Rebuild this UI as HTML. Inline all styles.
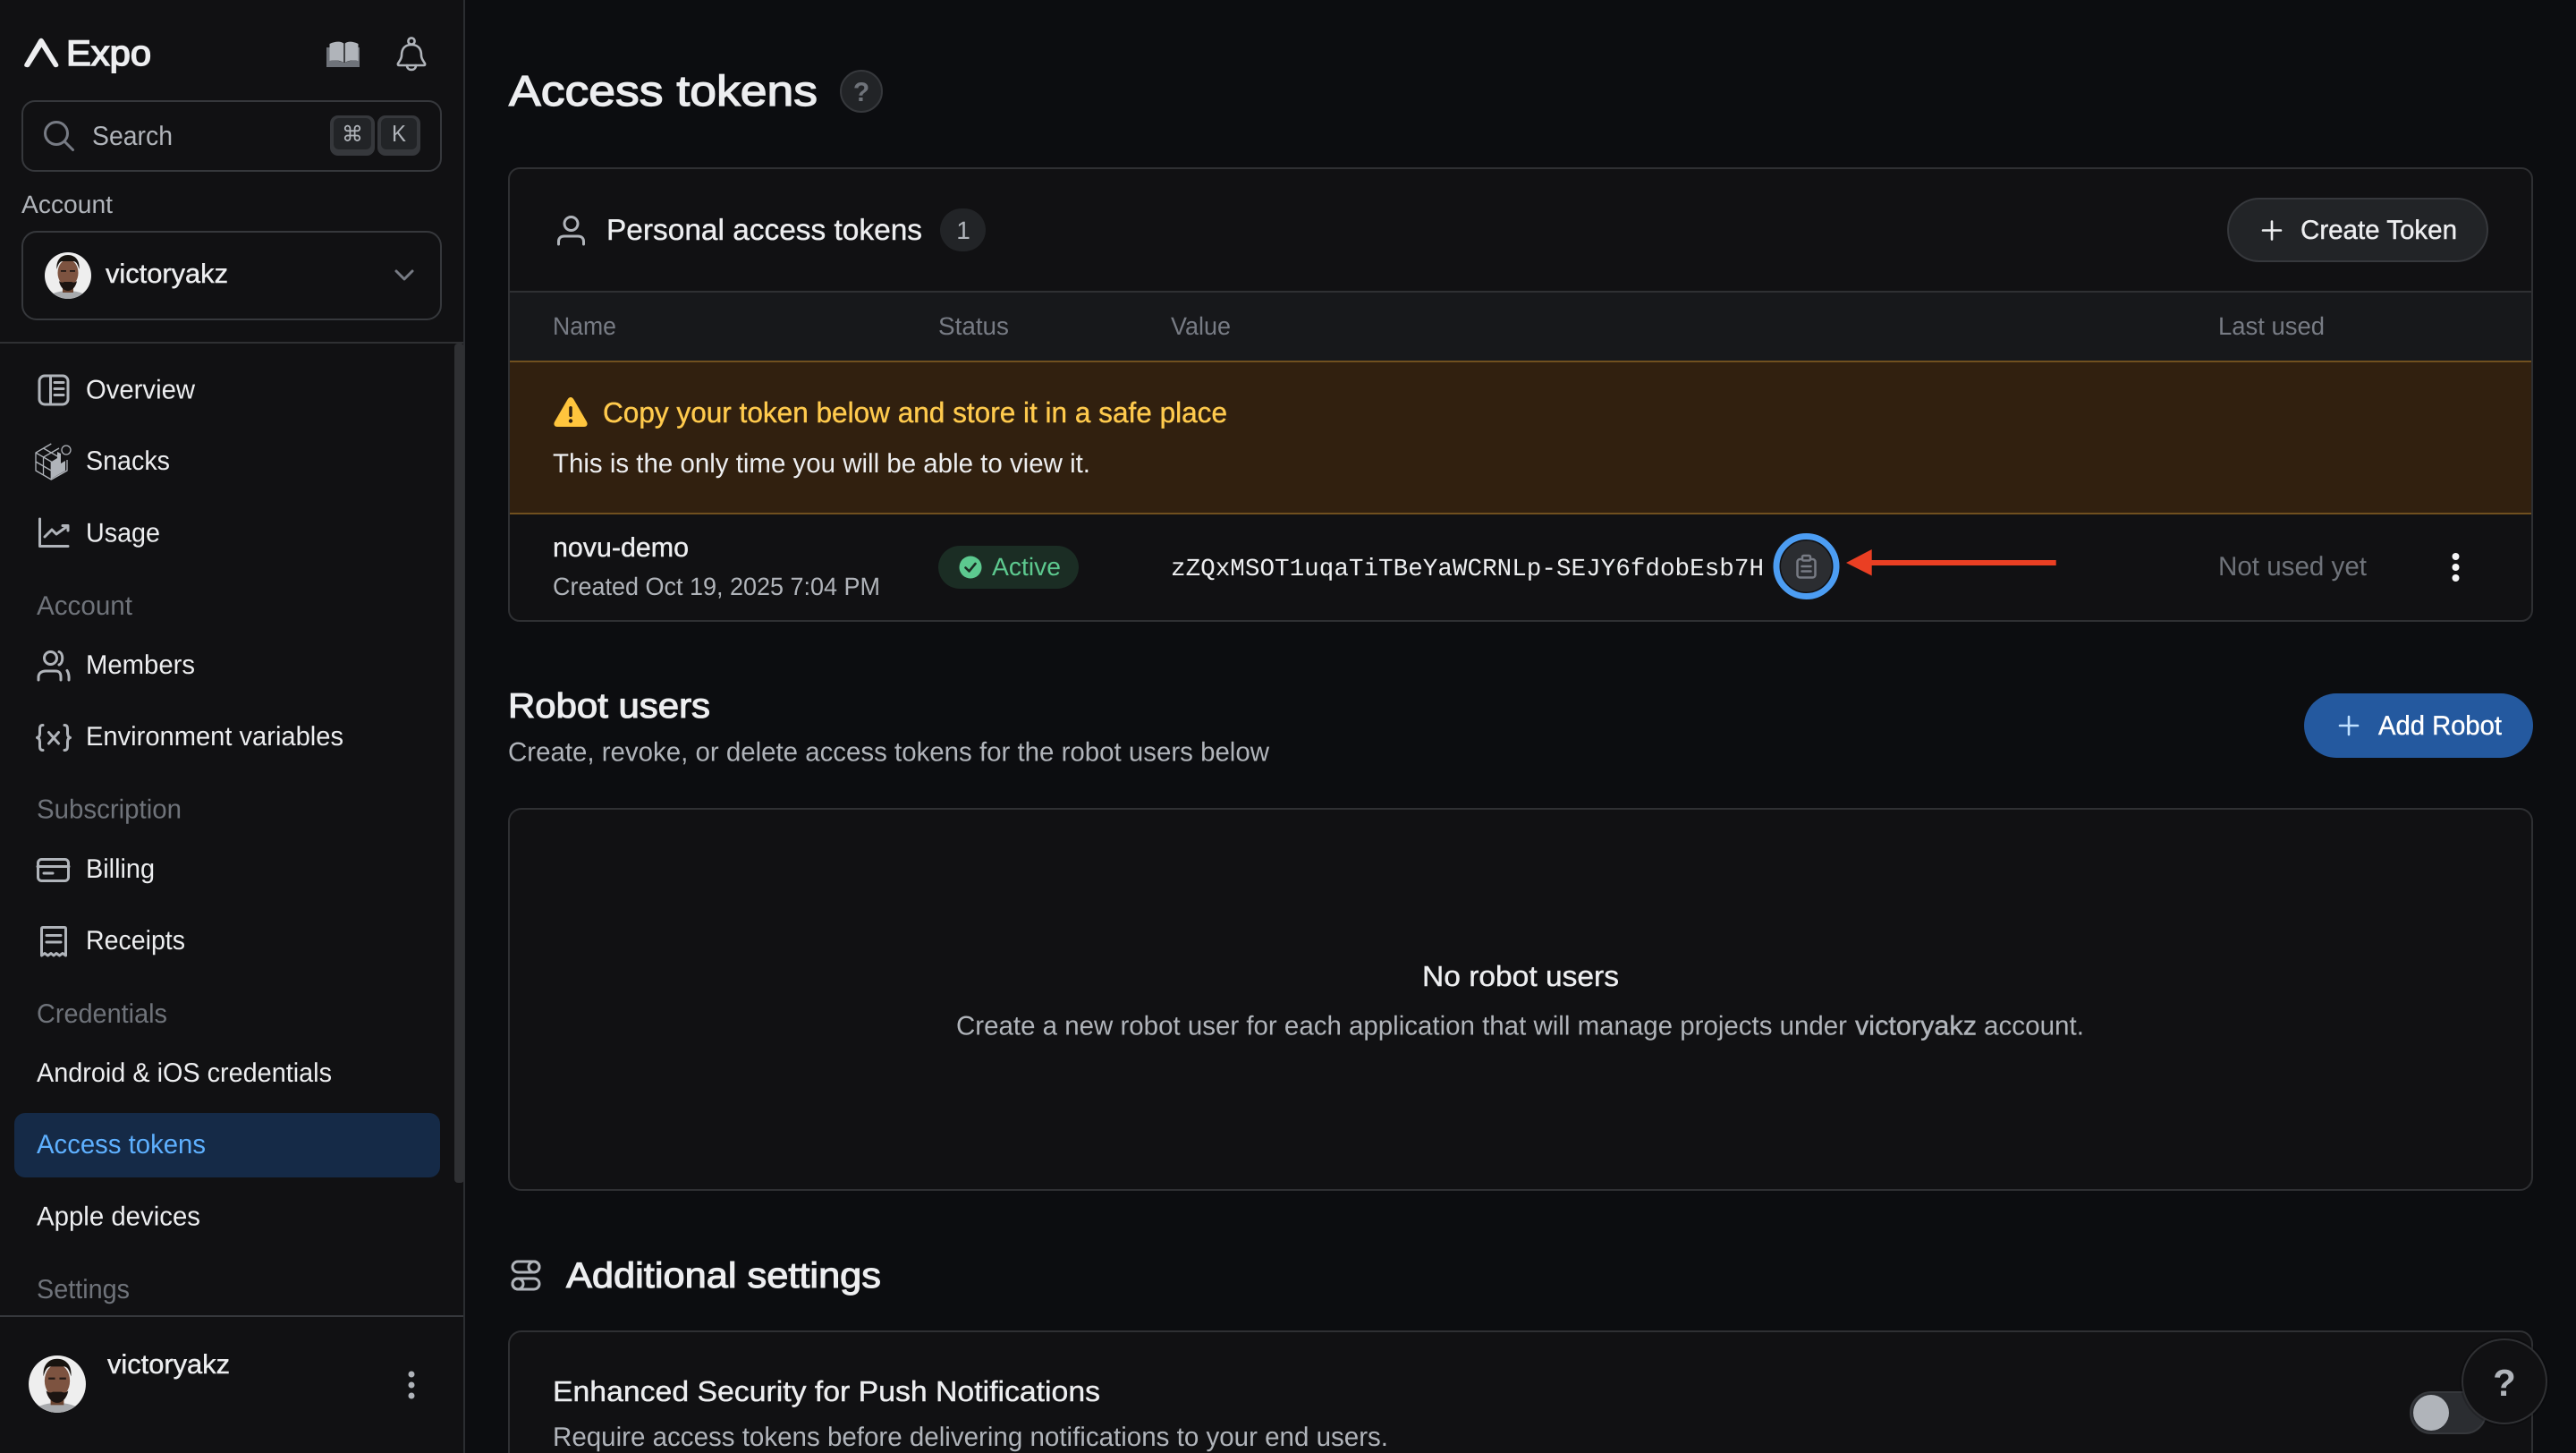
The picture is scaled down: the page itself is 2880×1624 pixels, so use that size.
<!DOCTYPE html>
<html lang="en">
<head>
<meta charset="utf-8">
<title>Access tokens - Expo</title>
<style>
html,body{margin:0;padding:0;background:#0c0d10;width:2880px;height:1624px;overflow:hidden}
svg{display:block}
text{font-family:"Liberation Sans",sans-serif;font-size:30px;fill:#edeef0;color:#edeef0;text-rendering:geometricPrecision}
.b{stroke:currentColor;stroke-width:1.1px}
.m{stroke:currentColor;stroke-width:.4px}
.dim{fill:#b0b4ba}
.sec{fill:#6f737a}
.ic{fill:none;stroke:#b0b4ba;stroke-width:3;stroke-linecap:round;stroke-linejoin:round}
</style>
</head>
<body>
<svg xmlns="http://www.w3.org/2000/svg" width="2880" height="1624" viewBox="0 0 2880 1624">
<defs>
  <clipPath id="avc"><circle cx="0" cy="0" r="26"/></clipPath>
  <g id="av" clip-path="url(#avc)">
    <rect x="-26" y="-26" width="52" height="52" fill="#eeeeee"/>
    <ellipse cx="0" cy="28" rx="24" ry="11" fill="#a8aaad"/>
    <rect x="-6" y="6" width="12" height="13" fill="#6a4431"/>
    <ellipse cx="0" cy="-3" rx="11.500" ry="15" fill="#7d5340"/>
    <path d="M-12.500-7C-13.500-17-8-23 0-23S13.500-17 12.500-7C11-13 9-16 6-16H-6C-9-16-11-13-12.500-7Z" fill="#17130f"/>
    <path d="M-10 6C-9 12-5 17 0 17S9 12 10 6C8 8 6 8 4 7H-4C-6 8-8 8-10 6Z" fill="#1b1411"/>
    <rect x="-8" y="-6" width="6" height="1.800" fill="#241a15"/><rect x="2" y="-6" width="6" height="1.800" fill="#241a15"/>
  </g>
</defs>

<rect width="2880" height="1624" fill="#0c0d10"/>

<!-- SIDEBAR -->
<rect x="0" y="0" width="518" height="1624" fill="#111113"/>
<rect x="518" y="0" width="2" height="1624" fill="#2b2d31"/>
<rect x="508" y="384" width="11" height="938" rx="4" fill="#2f3033"/>
<rect x="0" y="382" width="518" height="2" fill="#2f3033"/>
<rect x="0" y="1470" width="518" height="2" fill="#36383c"/>

<!-- logo -->
<path d="M28 74.500C27 74 27 72.500 27.500 71.500L43 45C44.500 42 47.500 42 49 45L65 71.500C65.500 72.500 65.500 74 64.500 74.500 63 75.500 61 75.500 60 74L46.500 52.500 33 74C32 75.500 30 75.500 28 74.500Z" fill="#edeef0"/>
<text class="b" x="74" y="73" style="font-size:40px;stroke-width:1.500px" textLength="95" lengthAdjust="spacingAndGlyphs">Expo</text>

<!-- book -->
<path d="M365 53H369V68C375 67 381 68 384 70H386C389 68 395 67 399 68V53H402V75H365Z" fill="#6f737a"/>
<path d="M368.500 49C375 46 381 46 384.300 48.500V70C381 67.500 375 67 368.500 68ZM400.500 49C394 46 389 46 385.700 48.500V70C389 67.500 394 67 400.500 68Z" fill="#b0b4ba"/>
<!-- bell -->
<g class="ic" style="stroke:#b0b4ba;stroke-width:2.600">
<circle cx="460" cy="46" r="3.600"/>
<path d="M449 62C449 54 453 50 460 50S471 54 471 62C471 66 474 69 475 71C475.500 72 475 73 474 73H446C445 73 444.500 72 445 71C446 69 449 66 449 62Z"/>
<path d="M455 73C455 76 457 78 460 78S465 76 465 73"/>
</g>

<!-- search -->
<rect x="25" y="113" width="468" height="78" rx="14" fill="none" stroke="#36383c" stroke-width="2"/>
<circle cx="63" cy="149" r="12.500" fill="none" stroke="#777b84" stroke-width="3"/>
<path d="M72 158 81.500 167.500" stroke="#777b84" stroke-width="3" stroke-linecap="round"/>
<text class="dim" x="103" y="162" textLength="90" lengthAdjust="spacingAndGlyphs">Search</text>
<rect x="369" y="129" width="50" height="45" rx="9" fill="#36383c"/>
<rect x="373" y="132" width="42" height="35" rx="6" fill="#222427"/>
<text class="dim" x="394" y="158" text-anchor="middle" style="font-size:24px;font-family:'DejaVu Sans',sans-serif">⌘</text>
<rect x="422" y="129" width="48" height="45" rx="9" fill="#36383c"/>
<rect x="426" y="132" width="40" height="35" rx="6" fill="#222427"/>
<text class="dim" x="438" y="158" style="font-size:26px" textLength="16" lengthAdjust="spacingAndGlyphs">K</text>

<!-- account -->
<text class="dim" x="24" y="238" style="font-size:28px" textLength="102" lengthAdjust="spacingAndGlyphs">Account</text>
<rect x="25" y="259" width="468" height="98" rx="16" fill="none" stroke="#36383c" stroke-width="2"/>
<use href="#av" transform="translate(76 308)"/>
<text class="m" x="118" y="316" textLength="137" lengthAdjust="spacingAndGlyphs">victoryakz</text>
<path d="M443 303 452 312 461 303" fill="none" stroke="#777b84" stroke-width="3" stroke-linecap="round" stroke-linejoin="round"/>

<!-- nav -->
<rect x="44" y="420" width="32" height="32" rx="6" class="ic"/>
<path d="M56.500 420V452M61 427.500H71M61 434.500H71M61 441.500H71" class="ic"/>
<text x="96" y="445.500" textLength="122" lengthAdjust="spacingAndGlyphs">Overview</text>

<g fill="none" stroke="#b0b4ba" stroke-width="1.300" stroke-linejoin="round">
  <path d="M57.300 496 40 506V526L57.300 536 75 526V514"/>
  <path d="M40 506 57.300 516V536M48.500 501 66 511M48.500 511V531M40 516 57.300 526M57.300 506 48.500 511M66 501 57.300 506"/>
  <circle cx="74" cy="503" r="5"/>
</g>
<path d="M57.500 516 64 512V505L68 507V518L73 515V526L57.500 535Z" fill="#b0b4ba"/>
<text x="96" y="525" textLength="94" lengthAdjust="spacingAndGlyphs">Snacks</text>

<path d="M44.500 580V610.500H76M50 600 58 592 63 597 75.500 588M70 587.500H76V593" class="ic"/>
<text x="96" y="605.500" textLength="83" lengthAdjust="spacingAndGlyphs">Usage</text>

<text class="sec" x="41" y="687" textLength="107" lengthAdjust="spacingAndGlyphs">Account</text>

<circle cx="56.500" cy="735.500" r="7" class="ic"/>
<path d="M66 728.500C71 730 71 741 66 743M43 760V757C43 752 47 750 51 750H62C66 750 68 752 68 757V760M75 749.500C76.500 752 77.500 755 77 760" class="ic"/>
<text x="96" y="753" textLength="122" lengthAdjust="spacingAndGlyphs">Members</text>

<path d="M48 810.500C44.500 810.500 44.500 813 44.500 816V820C44.500 822.500 43.500 824 41.500 824.500C43.500 825 44.500 826.500 44.500 829V833C44.500 836 44.500 838.500 48 838.500M72 810.500C75.500 810.500 75.500 813 75.500 816V820C75.500 822.500 76.500 824 78.500 824.500C76.500 825 75.500 826.500 75.500 829V833C75.500 836 75.500 838.500 72 838.500" class="ic"/>
<path d="M54.500 818.500 65.500 831M65.500 818.500 54.500 831" class="ic"/>
<text x="96" y="833" textLength="288" lengthAdjust="spacingAndGlyphs">Environment variables</text>

<text class="sec" x="41" y="914.500" textLength="162" lengthAdjust="spacingAndGlyphs">Subscription</text>

<rect x="42.500" y="960.500" width="34" height="24" rx="4" class="ic"/>
<path d="M42 968.500H77M49 976H59" class="ic"/>
<text x="96" y="981" textLength="77" lengthAdjust="spacingAndGlyphs">Billing</text>

<path d="M46.500 1068V1038C46.500 1037 47 1036.500 48 1036.500H72C73 1036.500 73.500 1037 73.500 1038V1068L70 1065.500 66.500 1068 63 1065.500 60 1068 57 1065.500 53.500 1068 50 1065.500Z" class="ic"/>
<path d="M52 1045.500H68M52 1053H68" class="ic"/>
<text x="96" y="1061" textLength="111" lengthAdjust="spacingAndGlyphs">Receipts</text>

<text class="sec" x="41" y="1143" textLength="146" lengthAdjust="spacingAndGlyphs">Credentials</text>
<text x="41" y="1209" textLength="330" lengthAdjust="spacingAndGlyphs">Android &amp; iOS credentials</text>
<rect x="16" y="1244" width="476" height="72" rx="12" fill="#152a47"/>
<text x="41" y="1289" style="fill:#5eb0ff" textLength="189" lengthAdjust="spacingAndGlyphs">Access tokens</text>
<text x="41" y="1369.500" textLength="183" lengthAdjust="spacingAndGlyphs">Apple devices</text>
<text class="sec" x="41" y="1451" textLength="104" lengthAdjust="spacingAndGlyphs">Settings</text>

<use href="#av" transform="translate(64 1547) scale(1.230)"/>
<text class="m" x="120" y="1535" textLength="137" lengthAdjust="spacingAndGlyphs">victoryakz</text>
<g fill="#b0b4ba"><circle cx="460" cy="1536" r="3.500"/><circle cx="460" cy="1548" r="3.500"/><circle cx="460" cy="1560" r="3.500"/></g>

<!-- MAIN -->
<text class="b" x="569" y="118" style="font-size:48px;stroke-width:1.300px" textLength="345" lengthAdjust="spacingAndGlyphs">Access tokens</text>
<circle cx="963" cy="102" r="23" fill="#222427" stroke="#36383c" stroke-width="2"/>
<text class="sec" x="963" y="113" text-anchor="middle" style="font-size:30px;font-weight:700">?</text>

<!-- Card 1 -->
<rect x="569" y="188" width="2262" height="506" rx="12" fill="#111113" stroke="#2f3033" stroke-width="2"/>
<circle cx="638.500" cy="250" r="7.500" fill="none" stroke="#b0b4ba" stroke-width="3"/>
<path d="M624.500 273V270C624.500 266 627 264 631 264H646C650 264 652.500 266 652.500 270V273" class="ic"/>
<text class="m" x="678" y="268" style="font-size:33px" textLength="353" lengthAdjust="spacingAndGlyphs">Personal access tokens</text>
<rect x="1051" y="233" width="51" height="48" rx="24" fill="#222427"/>
<text class="dim" x="1077" y="267" text-anchor="middle" style="font-size:28px">1</text>

<rect x="2491" y="222" width="290" height="70" rx="35" fill="#222427" stroke="#36383c" stroke-width="2"/>
<path d="M2540 247.500V267.500M2530 257.500H2550" stroke="#edeef0" stroke-width="2.600" stroke-linecap="round"/>
<text class="m" x="2572" y="267" textLength="175" lengthAdjust="spacingAndGlyphs">Create Token</text>

<rect x="570" y="325" width="2260" height="2" fill="#2f3033"/>
<rect x="570" y="327" width="2260" height="76" fill="#17181b"/>
<text x="618" y="374" style="font-size:28px;fill:#777b84" textLength="71" lengthAdjust="spacingAndGlyphs">Name</text>
<text x="1049" y="374" style="font-size:28px;fill:#777b84" textLength="79" lengthAdjust="spacingAndGlyphs">Status</text>
<text x="1309" y="374" style="font-size:28px;fill:#777b84" textLength="67" lengthAdjust="spacingAndGlyphs">Value</text>
<text x="2480" y="374" style="font-size:28px;fill:#777b84" textLength="119" lengthAdjust="spacingAndGlyphs">Last used</text>

<rect x="570" y="403" width="2260" height="172" fill="#31200f"/>
<rect x="570" y="403" width="2260" height="2" fill="#70501f"/>
<rect x="570" y="573" width="2260" height="2" fill="#70501f"/>
<path d="M638 444C636.500 444 635.500 445 634.500 446.500L620 471.500C618.500 474.500 620 477 623 477H653C656 477 657.500 474.500 656 471.500L641.500 446.500C640.500 445 639.500 444 638 444Z" fill="#ffc53d"/>
<rect x="636.200" y="454" width="3.600" height="12" rx="1.800" fill="#31200f"/><circle cx="638" cy="470.500" r="2.200" fill="#31200f"/>
<text class="m" x="674" y="472" style="fill:#ffca4d;font-size:32px;color:#ffca4d" textLength="698" lengthAdjust="spacingAndGlyphs">Copy your token below and store it in a safe place</text>
<text x="618" y="528" textLength="601" lengthAdjust="spacingAndGlyphs">This is the only time you will be able to view it.</text>

<text class="m" x="618" y="622" textLength="152" lengthAdjust="spacingAndGlyphs">novu-demo</text>
<text class="dim" x="618" y="665" style="font-size:28px" textLength="366" lengthAdjust="spacingAndGlyphs">Created Oct 19, 2025 7:04 PM</text>

<rect x="1049" y="610" width="157" height="48" rx="24" fill="#1b2d24"/>
<circle cx="1085" cy="634" r="12.500" fill="#5cc98f"/>
<path d="M1079.500 634.500 1083.500 638.500 1090.500 630" fill="none" stroke="#1b2d24" stroke-width="2.600" stroke-linecap="round" stroke-linejoin="round"/>
<text x="1109" y="643" style="fill:#5dc98f;font-size:28px" textLength="77" lengthAdjust="spacingAndGlyphs">Active</text>

<text x="1309" y="643" style="font-size:27.600px;font-family:'Liberation Mono',monospace" textLength="663">zZQxMSOT1uqaTiTBeYaWCRNLp-SEJY6fdobEsb7H</text>

<circle cx="2019.500" cy="633" r="33.500" fill="none" stroke="#4c9df3" stroke-width="7"/>
<circle cx="2019.500" cy="633" r="28.500" fill="#2b2d31"/>
<g fill="none" stroke="#777b84" stroke-width="2.500" stroke-linecap="round" stroke-linejoin="round">
  <rect x="2009.500" y="625" width="20" height="20.500" rx="3"/>
  <rect x="2015" y="621" width="9" height="5.500" rx="1.500" fill="#2b2d31"/>
  <path d="M2014.500 633H2024.500M2014.500 638.500H2024.500"/>
</g>
<path d="M2064 629 2092.700 614V626H2298.700V632H2092.700V643.500Z" fill="#ea3f23"/>

<text class="sec" x="2480" y="643" textLength="166" lengthAdjust="spacingAndGlyphs">Not used yet</text>
<g fill="#f5f5f6"><circle cx="2745.500" cy="622" r="4"/><circle cx="2745.500" cy="634" r="4"/><circle cx="2745.500" cy="646" r="4"/></g>

<!-- Robot users -->
<text class="b" x="568" y="802" style="font-size:39px" textLength="226" lengthAdjust="spacingAndGlyphs">Robot users</text>
<text class="dim" x="568" y="850.500" textLength="851" lengthAdjust="spacingAndGlyphs">Create, revoke, or delete access tokens for the robot users below</text>
<rect x="2576" y="775" width="256" height="72" rx="36" fill="#24599f"/>
<path d="M2626 801V821M2616 811H2636" stroke="#bfe0ff" stroke-width="2.600" stroke-linecap="round"/>
<text class="m" x="2659" y="821" style="fill:#fff;color:#fff" textLength="138" lengthAdjust="spacingAndGlyphs">Add Robot</text>

<rect x="569" y="904" width="2262" height="426" rx="14" fill="#111113" stroke="#2f3033" stroke-width="2"/>
<text class="m" x="1590" y="1102" style="font-size:32px" textLength="220" lengthAdjust="spacingAndGlyphs">No robot users</text>
<text class="dim" x="1069" y="1156.500" textLength="996" lengthAdjust="spacingAndGlyphs">Create a new robot user for each application that will manage projects under</text>
<text class="dim m" x="2074" y="1156.500" style="color:#b0b4ba" textLength="136" lengthAdjust="spacingAndGlyphs">victoryakz</text>
<text class="dim" x="2218" y="1156.500" textLength="112" lengthAdjust="spacingAndGlyphs">account.</text>

<!-- Additional settings -->
<g fill="none" stroke="#b0b4ba" stroke-width="3">
  <rect x="573" y="1410" width="30" height="12" rx="6"/><circle cx="597" cy="1416" r="6"/>
  <rect x="573" y="1429" width="30" height="12" rx="6"/><circle cx="579" cy="1435" r="6"/>
</g>
<text class="b" x="633" y="1439" style="font-size:40px" textLength="352" lengthAdjust="spacingAndGlyphs">Additional settings</text>

<rect x="569" y="1488" width="2262" height="170" rx="14" fill="#111113" stroke="#2f3033" stroke-width="2"/>
<text class="m" x="618" y="1566" style="font-size:32px" textLength="612" lengthAdjust="spacingAndGlyphs">Enhanced Security for Push Notifications</text>
<text class="dim" x="618" y="1616" textLength="934" lengthAdjust="spacingAndGlyphs">Require access tokens before delivering notifications to your end users.</text>

<rect x="2695" y="1556" width="84" height="46" rx="23" fill="#2b2d31" stroke="#36383c" stroke-width="2"/>
<circle cx="2718" cy="1579" r="20" fill="#b0b4ba"/>

<circle cx="2800" cy="1544" r="50" fill="#000" opacity=".18"/>
<circle cx="2800" cy="1544" r="47" fill="#111113" stroke="#2f3033" stroke-width="2"/>
<text x="2800" y="1560" text-anchor="middle" style="font-size:42px;font-weight:700;fill:#b0b4ba">?</text>
</svg>
</body>
</html>
